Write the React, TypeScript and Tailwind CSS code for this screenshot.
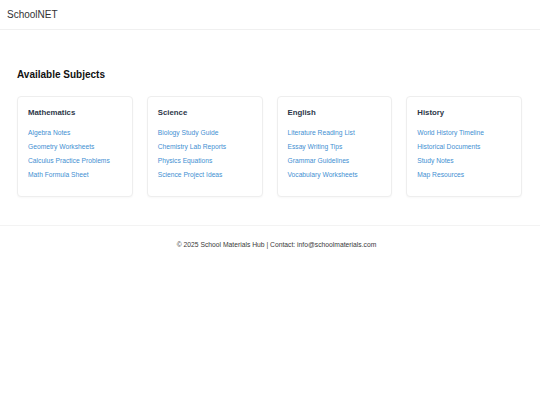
const subjects = [
  {
    name: 'Mathematics',
    links: ['Algebra Notes', 'Geometry Worksheets', 'Calculus Practice Problems', 'Math Formula Sheet'],
  },
  {
    name: 'Science',
    links: ['Biology Study Guide', 'Chemistry Lab Reports', 'Physics Equations', 'Science Project Ideas'],
  },
  {
    name: 'English',
    links: ['Literature Reading List', 'Essay Writing Tips', 'Grammar Guidelines', 'Vocabulary Worksheets'],
  },
  {
    name: 'History',
    links: ['World History Timeline', 'Historical Documents', 'Study Notes', 'Map Resources'],
  },
];

export default function App() {
  return (
    <div className="min-h-screen bg-white font-['Liberation_Sans',Arial,sans-serif]">
      {/* Header */}
      <header className="h-[30px] flex items-center px-[7px] border-b border-[#f0f0f0]">
        <span className="text-[10px] leading-none text-[#333]">SchoolNET</span>
      </header>

      {/* Subjects */}
      <main className="px-[17px] pt-[39px] pb-[28px] border-b border-[#f3f3f3]">
        <h2 className="text-[10px] leading-[12px] font-bold text-[#111]">Available Subjects</h2>
        <div className="mt-[15px] grid grid-cols-4 gap-[14px] pr-[1px]">
          {subjects.map((s) => (
            <div
              key={s.name}
              className="h-[101px] rounded-[4px] border border-[#eeeeee] bg-white px-[10px] pt-[11px] shadow-[0_1px_2px_rgba(0,0,0,0.03)]"
            >
              <h3 className="text-[7.8px] leading-[10px] font-bold text-[#2d3748]">{s.name}</h3>
              <ul className="mt-[9.5px] flex flex-col gap-[4.2px]">
                {s.links.map((l) => (
                  <li key={l}>
                    <a href="#" className="text-[6.7px] leading-[10px] block text-[#3f8fd2]">
                      {l}
                    </a>
                  </li>
                ))}
              </ul>
            </div>
          ))}
        </div>
      </main>

      {/* Footer */}
      <footer className="pt-[14px] pl-[13px] text-center">
        <p className="text-[6.75px] leading-[10px] text-[#3a3a3a]">
          © 2025 School Materials Hub | Contact: info@schoolmaterials.com
        </p>
      </footer>
    </div>
  );
}
